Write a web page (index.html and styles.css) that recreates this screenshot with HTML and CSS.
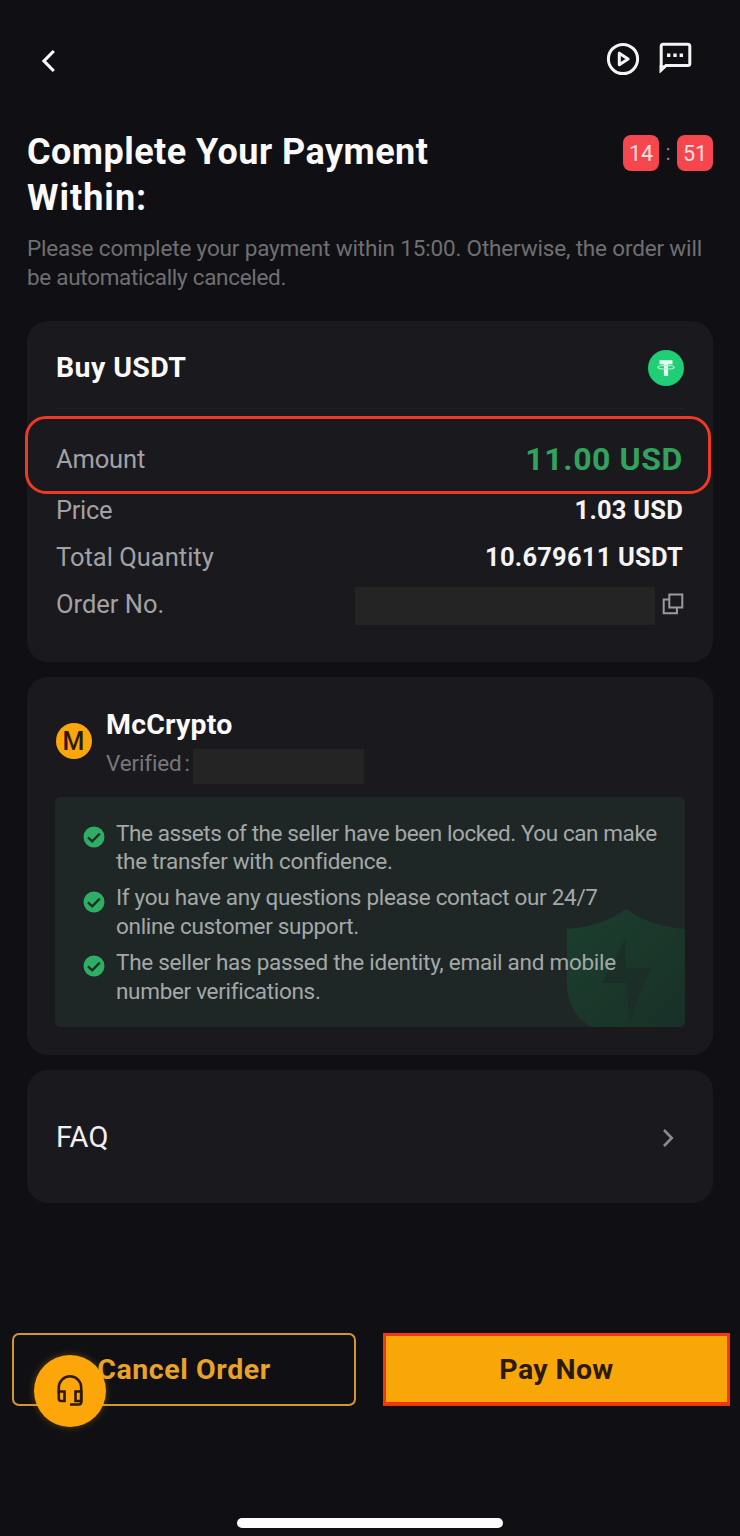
FILE: index.html
```html
<!DOCTYPE html>
<html lang="en">
<head>
<meta charset="utf-8">
<title>Complete Your Payment</title>
<link rel="stylesheet" href="styles.css">
</head>
<body>
<main class="screen">
  <header class="topbar">
    <svg class="icon-back" viewBox="0 0 16 26"><path d="M13.800 3 4 13l9.800 10"/></svg>
    <div class="topbar-actions">
      <svg class="icon-play" viewBox="0 0 34 34"><circle cx="17" cy="17" r="14.6"/><path d="M13.3 11.2v11.6l8.8-5.8z"/></svg>
      <svg class="icon-chat" viewBox="0 0 34 34"><path class="bubble" d="M3.2 28.6V5.2q0-2 2-2h24.600q2 0 2 2v17.200q0 2-2 2H8z"/><path class="tail" d="M1.700 24v8.600L9.500 25z"/><path class="dots" d="M9 12.500h3.400v3.400H9zM15.300 12.500h3.400v3.400h-3.400zM21.600 12.500H25v3.400h-3.400z"/></svg>
    </div>
  </header>

  <section class="intro">
    <div class="intro-head">
      <h1 class="title"><span class="t1">Complete Your Payment</span><br><span class="t2">Within:</span></h1>
      <div class="timer"><span class="timer-box">14</span><span class="timer-sep">:</span><span class="timer-box">51</span></div>
    </div>
    <p class="subtitle"><span class="s1">Please complete your payment within 15:00. Otherwise, the order will</span><br><span class="s2">be automatically canceled.</span></p>
  </section>

  <section class="card order">
    <div class="order-head">
      <h2 class="heading buy">Buy USDT</h2>
      <svg class="icon-usdt" viewBox="0 0 36 36"><circle cx="18" cy="18" r="18"/><path class="tee" d="M11.500 10.200h13v4.100h-4.400V26h-4.200V14.300h-4.400z"/><ellipse cx="18" cy="17.300" rx="8.200" ry="1.900"/></svg>
    </div>
    <dl class="rows">
      <div class="row row-amount"><dt class="k-amount">Amount</dt><dd class="amount">11.00 USD</dd></div>
      <div class="row"><dt class="k-price">Price</dt><dd class="value">1.03 USD</dd></div>
      <div class="row"><dt>Total Quantity</dt><dd class="value">10.679611 USDT</dd></div>
      <div class="row"><dt>Order No.</dt><dd class="order-no"><span class="mask"></span><svg class="icon-copy" viewBox="0 0 22 22"><path d="M7.300 1.500h13v13h-13z"/><path d="M7.300 6.500H1.700v13.800h13.200v-5.800"/></svg></dd></div>
    </dl>
    <div class="highlight"></div>
  </section>

  <section class="card seller">
    <div class="seller-head">
      <span class="avatar">M</span>
      <div>
        <h2 class="heading name">McCrypto</h2>
        <div class="verified"><span>Verified</span><span class="colon">:</span><span class="mask mask-small"></span></div>
      </div>
    </div>
    <div class="notice">
      <svg class="shield" viewBox="0 0 118 118">
        <defs><linearGradient id="sh" x1="0" y1="0" x2="1" y2="1"><stop offset="0" stop-color="#1b3f2d"/><stop offset="1" stop-color="#193028"/></linearGradient></defs>
        <path fill="url(#sh)" d="M0 20Q36 17 59 0q23 17 59 20v98H24Q0 103 0 76z"/>
        <path fill="#1b2f28" d="M58 31 35 74h25l2 38 22-53H59z"/>
      </svg>
      <ul class="checks">
        <li><svg class="icon-check" viewBox="0 0 22 22"><circle cx="11" cy="11" r="10.500"/><path d="m5 11.300 4.200 4 7.600-7.700"/></svg><p><span class="c1">The assets of the seller have been locked. You can make</span><br><span>the transfer with confidence.</span></p></li>
        <li><svg class="icon-check" viewBox="0 0 22 22"><circle cx="11" cy="11" r="10.500"/><path d="m5 11.300 4.200 4 7.600-7.700"/></svg><p><span>If you have any questions please contact our 24/7</span><br><span>online customer support.</span></p></li>
        <li><svg class="icon-check" viewBox="0 0 22 22"><circle cx="11" cy="11" r="10.500"/><path d="m5 11.300 4.200 4 7.600-7.700"/></svg><p><span class="c5">The seller has passed the identity, email and mobile</span><br><span>number verifications.</span></p></li>
      </ul>
    </div>
  </section>

  <section class="card faq">
    <span class="faq-label">FAQ</span>
    <svg class="icon-next" viewBox="0 0 12 20"><path d="m2 2 7.800 8L2 18"/></svg>
  </section>

  <footer class="actions">
    <button class="btn btn-cancel">Cancel Order</button>
    <button class="btn btn-pay">Pay Now</button>
    <span class="support">
      <svg class="icon-headset" viewBox="0 0 26 32"><path d="M1.800 18V12.500a11.200 11.200 0 0 1 22.400 0V27q0 2.500-2.500 2.500H13"/><path d="M1.800 16.500h5.700V26H4.300q-2.500 0-2.500-2.500zM18.500 16.500h5.700V26h-5.700z"/></svg>
    </span>
  </footer>
  <div class="home-bar"></div>
</main>
</body>
</html>
```
FILE: styles.css
```css
* { box-sizing: border-box; margin: 0; padding: 0; }
body { background: #101014; }
.screen {
  position: relative;
  display: flex;
  flex-direction: column;
  width: 740px;
  height: 1536px;
  overflow: hidden;
  background: #101014;
  color: #fafafa;
  font-family: Roboto, "Noto Sans", sans-serif;
  white-space: nowrap;
}
svg { display: block; flex: none; fill: none; }

.topbar { display: flex; justify-content: space-between; height: 128.5px; padding: 41px 48px 0 40px; }
.icon-back { width: 16px; height: 26px; margin-top: 6.5px; stroke: #fafafa; stroke-width: 3.2; }
.topbar-actions { display: flex; gap: 18px; }
.icon-play { width: 34px; height: 34px; margin-top: 1px; stroke: #f4f4f5; stroke-width: 3; stroke-linejoin: round; }
.icon-chat { width: 34px; height: 34px; }
.bubble { stroke: #f4f4f5; stroke-width: 3; }
.tail, .dots { fill: #f4f4f5; }

.intro { padding: 0 27px; }
.intro-head { display: flex; justify-content: space-between; }
.title { font-size: 36px; line-height: 46.5px; font-weight: 700; }
.t1 { letter-spacing: 0.46px; }
.t2 { letter-spacing: 1px; }
.timer { display: flex; height: 36px; margin-top: 6.5px; }
.timer-box { width: 36px; border-radius: 8px; background: #f5464e; color: #fbe0e1; font-size: 21.5px; line-height: 37px; text-align: center; }
.timer-sep { width: 18px; color: #858589; font-size: 21.5px; line-height: 36px; text-align: center; }
.subtitle { margin-top: 12.5px; color: #6f6f72; font-size: 22.5px; line-height: 28.75px; }
.s1 { letter-spacing: -0.165px; }
.s2 { letter-spacing: -0.3px; }

.card { position: relative; margin: 0 27px; border-radius: 21px; background: #1a191e; }
.heading { font-size: 28.5px; font-weight: 700; line-height: 36px; }
.buy { letter-spacing: 0.4px; }
.name { letter-spacing: 0.2px; }
.order { height: 341.5px; margin-top: 29px; padding: 29.5px 29px 0; }
.order-head { display: flex; justify-content: space-between; height: 59px; border-bottom: 1.5px solid #222126; }
.icon-usdt { width: 36px; height: 36px; fill: #1fce75; }
.icon-usdt .tee { fill: #e9fff3; }
.icon-usdt ellipse { fill: none; stroke: #b4f3d0; stroke-width: 1.2; }
.rows { padding-top: 22px; font-size: 25.5px; }
.row { display: flex; align-items: center; justify-content: space-between; height: 46.7px; padding-right: 1px; color: #a2a2a5; }
.row-amount { height: 56px; }
.k-amount { letter-spacing: -0.15px; }
.k-price { letter-spacing: -0.35px; }
.row dd { color: #f4f4f5; font-weight: 700; }
.row .value { letter-spacing: 0.22px; }
.row .amount { color: #32a25e; font-size: 32px; letter-spacing: 0.6px; }
.order-no { display: flex; align-items: center; gap: 7px; }
.mask { width: 300px; height: 38px; margin-top: 4px; background: #242424; }
.icon-copy { width: 22px; height: 22px; margin-right: -1px; stroke: #9b9b9e; stroke-width: 2; }
.highlight { position: absolute; left: -2px; top: 95.5px; width: 686px; height: 78px; border: 3px solid #ee3a25; border-radius: 21px; }

.seller { height: 378px; margin-top: 15px; padding: 0 28px; }
.seller-head { display: flex; height: 120px; padding: 30px 0 0 0.5px; gap: 14.5px; }
.avatar { width: 36px; height: 36px; margin-top: 16px; border-radius: 50%; background: #fba70b; color: #2b1a08; font-size: 25px; font-weight: 500; line-height: 37px; text-align: center; }
.verified { display: flex; align-items: flex-start; margin-top: 6px; color: #77777a; font-size: 22.5px; letter-spacing: -0.15px; line-height: 28px; }
.colon { width: 11px; text-align: center; }
.mask-small { width: 171px; height: 35px; margin-top: 0; }
.notice { position: relative; height: 230px; padding: 21.5px 28px 0; border-radius: 5px; background: #1f2626; overflow: hidden; }
.shield { position: absolute; right: 0; bottom: 0; width: 118px; height: 118px; }
.checks { position: relative; list-style: none; display: flex; flex-direction: column; gap: 7.2px; color: #a4a8a8; font-size: 22.5px; letter-spacing: -0.31px; line-height: 28.75px; }
.c1 { letter-spacing: -0.42px; }
.c5 { letter-spacing: -0.27px; }
.checks li { display: flex; gap: 11px; }
.icon-check { width: 22px; height: 22px; margin-top: 7.5px; }
.icon-check circle { fill: #2fad65; }
.icon-check path { stroke: #173326; stroke-width: 2.4; }

.faq { display: flex; align-items: center; justify-content: space-between; height: 133px; margin-top: 15px; padding: 0 39px 0 29px; }
.faq-label { color: #f0f0f1; font-size: 29px; }
.icon-next { width: 12px; height: 20px; margin-top: 3px; stroke: #8b8b8e; stroke-width: 2.6; }

.actions { position: relative; display: flex; justify-content: space-between; margin-top: 130px; padding: 0 10px 0 12px; }
.btn { font-family: inherit; font-size: 28.5px; font-weight: 700; line-height: 34px; }
.btn-cancel { width: 344px; height: 73px; border: 2px solid #d09632; border-radius: 7px; background: none; color: #e9a329; letter-spacing: 0.6px; }
.btn-pay { width: 347px; height: 72px; padding-top: 2px; border: 3px solid #f53613; background: #f9a708; color: #2b1a08; letter-spacing: 0.35px; box-shadow: 0 1px #d93c06; }
.support { position: absolute; left: 34px; top: 22px; display: flex; align-items: center; justify-content: center; width: 72px; height: 72px; border-radius: 50%; background: #fca60a; box-shadow: 0 0 7px #fca60a55; }
.icon-headset { width: 26px; height: 32px; stroke: #2b1a08; stroke-width: 2.6; }
.home-bar { width: 266px; height: 10px; margin: 112px 0 0 237px; border-radius: 5px; background: #fdfdfd; }
```
